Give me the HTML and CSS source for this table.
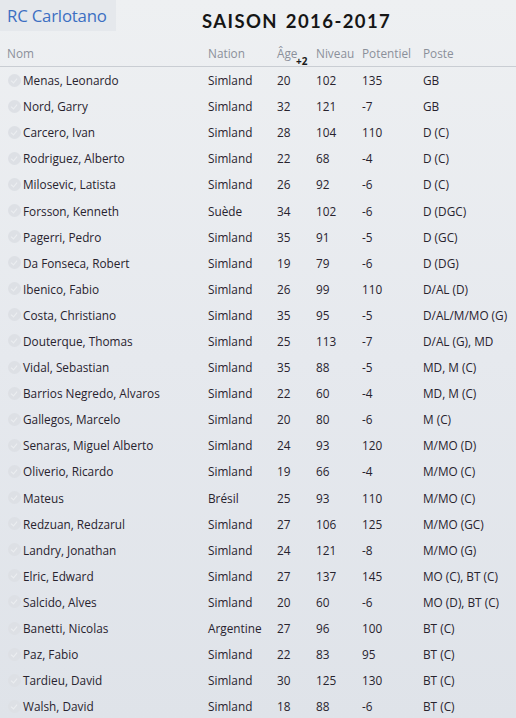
FILE: index.html
```html
<!DOCTYPE html>
<html lang="fr">
<head>
<meta charset="utf-8">
<title>RC Carlotano - Saison 2016-2017</title>
<link rel="stylesheet" href="styles.css">
</head>
<body>
<div class="page">
  <header class="top">
    <div class="club">RC Carlotano</div>
    <h1 class="season">Saison 2016-2017</h1>
  </header>
  <div class="table">
    <div class="row head">
      <div class="c-nom">Nom</div>
      <div>Nation</div>
      <div class="age-h">Âge<span class="plus">+2</span></div>
      <div>Niveau</div>
      <div>Potentiel</div>
      <div>Poste</div>
    </div>
    <div class="row"><div class="c-nom"><span class="chk"></span>Menas, Leonardo</div><div>Simland</div><div>20</div><div>102</div><div>135</div><div>GB</div></div>
    <div class="row"><div class="c-nom"><span class="chk"></span>Nord, Garry</div><div>Simland</div><div>32</div><div>121</div><div>-7</div><div>GB</div></div>
    <div class="row"><div class="c-nom"><span class="chk"></span>Carcero, Ivan</div><div>Simland</div><div>28</div><div>104</div><div>110</div><div>D (C)</div></div>
    <div class="row"><div class="c-nom"><span class="chk"></span>Rodriguez, Alberto</div><div>Simland</div><div>22</div><div>68</div><div>-4</div><div>D (C)</div></div>
    <div class="row"><div class="c-nom"><span class="chk"></span>Milosevic, Latista</div><div>Simland</div><div>26</div><div>92</div><div>-6</div><div>D (C)</div></div>
    <div class="row"><div class="c-nom"><span class="chk"></span>Forsson, Kenneth</div><div>Suède</div><div>34</div><div>102</div><div>-6</div><div>D (DGC)</div></div>
    <div class="row"><div class="c-nom"><span class="chk"></span>Pagerri, Pedro</div><div>Simland</div><div>35</div><div>91</div><div>-5</div><div>D (GC)</div></div>
    <div class="row"><div class="c-nom"><span class="chk"></span>Da Fonseca, Robert</div><div>Simland</div><div>19</div><div>79</div><div>-6</div><div>D (DG)</div></div>
    <div class="row"><div class="c-nom"><span class="chk"></span>Ibenico, Fabio</div><div>Simland</div><div>26</div><div>99</div><div>110</div><div>D/AL (D)</div></div>
    <div class="row"><div class="c-nom"><span class="chk"></span>Costa, Christiano</div><div>Simland</div><div>35</div><div>95</div><div>-5</div><div>D/AL/M/MO (G)</div></div>
    <div class="row"><div class="c-nom"><span class="chk"></span>Douterque, Thomas</div><div>Simland</div><div>25</div><div>113</div><div>-7</div><div>D/AL (G), MD</div></div>
    <div class="row"><div class="c-nom"><span class="chk"></span>Vidal, Sebastian</div><div>Simland</div><div>35</div><div>88</div><div>-5</div><div>MD, M (C)</div></div>
    <div class="row"><div class="c-nom"><span class="chk"></span>Barrios Negredo, Alvaros</div><div>Simland</div><div>22</div><div>60</div><div>-4</div><div>MD, M (C)</div></div>
    <div class="row"><div class="c-nom"><span class="chk"></span>Gallegos, Marcelo</div><div>Simland</div><div>20</div><div>80</div><div>-6</div><div>M (C)</div></div>
    <div class="row"><div class="c-nom"><span class="chk"></span>Senaras, Miguel Alberto</div><div>Simland</div><div>24</div><div>93</div><div>120</div><div>M/MO (D)</div></div>
    <div class="row"><div class="c-nom"><span class="chk"></span>Oliverio, Ricardo</div><div>Simland</div><div>19</div><div>66</div><div>-4</div><div>M/MO (C)</div></div>
    <div class="row"><div class="c-nom"><span class="chk"></span>Mateus</div><div>Brésil</div><div>25</div><div>93</div><div>110</div><div>M/MO (C)</div></div>
    <div class="row"><div class="c-nom"><span class="chk"></span>Redzuan, Redzarul</div><div>Simland</div><div>27</div><div>106</div><div>125</div><div>M/MO (GC)</div></div>
    <div class="row"><div class="c-nom"><span class="chk"></span>Landry, Jonathan</div><div>Simland</div><div>24</div><div>121</div><div>-8</div><div>M/MO (G)</div></div>
    <div class="row"><div class="c-nom"><span class="chk"></span>Elric, Edward</div><div>Simland</div><div>27</div><div>137</div><div>145</div><div>MO (C), BT (C)</div></div>
    <div class="row"><div class="c-nom"><span class="chk"></span>Salcido, Alves</div><div>Simland</div><div>20</div><div>60</div><div>-6</div><div>MO (D), BT (C)</div></div>
    <div class="row"><div class="c-nom"><span class="chk"></span>Banetti, Nicolas</div><div>Argentine</div><div>27</div><div>96</div><div>100</div><div>BT (C)</div></div>
    <div class="row"><div class="c-nom"><span class="chk"></span>Paz, Fabio</div><div>Simland</div><div>22</div><div>83</div><div>95</div><div>BT (C)</div></div>
    <div class="row"><div class="c-nom"><span class="chk"></span>Tardieu, David</div><div>Simland</div><div>30</div><div>125</div><div>130</div><div>BT (C)</div></div>
    <div class="row"><div class="c-nom"><span class="chk"></span>Walsh, David</div><div>Simland</div><div>18</div><div>88</div><div>-6</div><div>BT (C)</div></div>
  </div>
</div>
</body>
</html>
```
FILE: styles.css
```css
html, body {
  margin: 0;
  padding: 0;
}
body {
  width: 516px;
  height: 718px;
  overflow: hidden;
  background: linear-gradient(180deg, #eef0f2 0%, #e6e9ee 50%, #dfe3e9 100%);
  font-family: "Open Sans", "Liberation Sans", sans-serif;
  color: #28232e;
}
.page {
  display: flex;
  flex-direction: column;
}
.top {
  height: 40px;
  position: relative;
}
.club {
  width: 109px;
  height: 31px;
  padding-left: 7px;
  background: #e5e8ec;
  color: #3c6fc2;
  font-size: 16.8px;
  line-height: 31px;
  letter-spacing: -0.2px;
}
.season {
  position: absolute;
  left: 202px;
  top: 7px;
  margin: 0;
  font-family: "Lato", sans-serif;
  font-weight: 700;
  font-size: 18.5px;
  line-height: 28px;
  text-transform: uppercase;
  letter-spacing: 1.4px;
  word-spacing: 2px;
  color: #161616;
}
.table {
  display: flex;
  flex-direction: column;
}
.row {
  display: grid;
  grid-template-columns: 201px 69px 39px 46px 61px 1fr;
  padding-left: 7px;
  height: 26.1px;
  align-items: center;
  font-size: 11.8px;
  white-space: nowrap;
}
.row.head {
  height: 26px;
  color: #8b909a;
  border-bottom: 1px solid #c9cdd3;
}
.c-nom {
  display: flex;
  align-items: center;
}
.chk {
  width: 13px;
  height: 13px;
  border-radius: 50%;
  background: #dde0e5;
  margin-left: 1px;
  margin-right: 2px;
  position: relative;
}
.chk::after {
  content: "";
  position: absolute;
  left: 4px;
  top: 3px;
  width: 3px;
  height: 5px;
  border: solid #eceef1;
  border-width: 0 1.5px 1.5px 0;
  transform: rotate(40deg);
}
.age-h {
  position: relative;
}
.plus {
  position: absolute;
  left: 19px;
  top: 11px;
  font-size: 10px;
  line-height: 10px;
  font-weight: 700;
  color: #1a1a1a;
}
```
